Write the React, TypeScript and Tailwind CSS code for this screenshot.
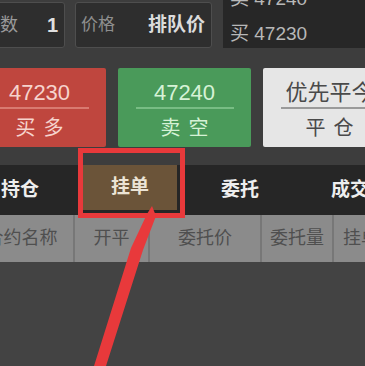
import React from "react";

const font = { fontFamily: '"Liberation Sans", "Noto Sans CJK SC", sans-serif' };

// ─── Order buttons ───────────────────────────────────────────────────────────

function OrderButton({
  top,
  label,
  tone,
}: {
  top: string;
  label: string;
  tone: "red" | "green" | "white";
}) {
  const box =
    tone === "red"
      ? "bg-[#bf463e] text-[#f6d3cd]"
      : tone === "green"
        ? "bg-[#4a9a5a] text-[#d6f2d6]"
        : "bg-[#e6e6e6] text-[#4a4a4a]";
  const line =
    tone === "red" ? "bg-[#d97a70]" : tone === "green" ? "bg-[#78bd84]" : "bg-[#9a9a9a]";
  return (
    <div className={`flex h-[79px] w-[133px] shrink-0 flex-col items-center rounded-[2px] ${box}`}>
      <div className="flex h-[39px] items-end pb-[3px] text-[22px] leading-none whitespace-nowrap">{top}</div>
      <div className={`h-[2px] w-[98px] ${line}`} />
      <div className="flex flex-1 items-center pl-[8px] text-[20px] leading-none tracking-[8px]">{label}</div>
    </div>
  );
}

export default function App() {
  const tabs = ["持仓", "挂单", "委托", "成交"];
  const cols = [
    { label: "合约名称", w: "w-[103px]" },
    { label: "开平", w: "w-[75px]" },
    { label: "委托价", w: "w-[112px]" },
    { label: "委托量", w: "w-[72px]" },
    { label: "挂单时间", w: "w-[92px]" },
  ];

  return (
    <div className="relative h-[366px] w-[365px] overflow-hidden bg-[#3d3d3d]" style={font}>
      {/* Top inputs */}
      <div className="flex h-[48px] pt-[2px]">
        <div className="ml-[-25px] flex h-[46px] w-[90px] shrink-0 items-center justify-between rounded-[3px] border border-[#4e4e4e] bg-[#2e2e2e] pl-[24px] pr-[6px]">
          <span className="text-[18px] text-[#9a9a9a]">数</span>
          <span className="text-[20px] font-bold text-[#e0e0e0]">1</span>
        </div>
        <div className="ml-[10px] flex h-[46px] w-[137px] shrink-0 items-center justify-between rounded-[3px] border border-[#4e4e4e] bg-[#2e2e2e] pl-[5px] pr-[6px]">
          <span className="text-[17px] text-[#8e8e8e]">价格</span>
          <span className="text-[19px] font-bold text-[#dcdcdc]">排队价</span>
        </div>
        <div className="ml-[11px] mt-[-2px] flex h-[48px] flex-1 flex-col justify-end overflow-hidden bg-[#272727] pb-[5px] pl-[7px] text-[19px] leading-none text-[#b8b8b8]">
          <div className="mb-[16px]">卖 47240</div>
          <div>买 47230</div>
        </div>
      </div>

      {/* Buy / sell buttons */}
      <div className="ml-[-27px] mt-[20px] flex gap-[12px]">
        <OrderButton top="47230" label="买多" tone="red" />
        <OrderButton top="47240" label="卖空" tone="green" />
        <OrderButton top="优先平今" label="平仓" tone="white" />
      </div>

      {/* Tabs */}
      <div className="mt-[18px] flex h-[50px] bg-[#262626]">
        <div className="ml-[-35px] flex">
          {tabs.map((t) => (
            <div key={t} className="flex w-[110px] shrink-0 items-center justify-center">
              {t === "挂单" ? (
                <div className="flex h-[45px] w-[94px] items-center justify-center self-start bg-[#6b5439] text-[19px] font-bold text-[#ece4d6]">
                  {t}
                </div>
              ) : (
                <span className="text-[19px] font-bold text-[#eeeeee]">{t}</span>
              )}
            </div>
          ))}
        </div>
      </div>

      {/* Table header */}
      <div className="flex h-[47px] bg-[#8b8b8b]">
        <div className="ml-[-30px] flex">
          {cols.map((c, i) => (
            <div
              key={c.label}
              className={`flex ${c.w} shrink-0 items-center justify-center text-[18px] text-[#4f4f4f] ${i > 0 ? "border-l-2 border-[#777777]" : ""}`}
            >
              {c.label}
            </div>
          ))}
        </div>
      </div>
      <div className="h-[104px] bg-[#434343]" />

      {/* Annotation */}
      <div className="absolute left-[78px] top-[148px] h-[70px] w-[107px] border-[5px] border-[#e8393b]" />
      <svg className="absolute left-0 top-0" width="365" height="366" viewBox="0 0 365 366">
        <polygon points="152,206 156,216 143,250 106,366 94,366 131,248 147,214" fill="#e8393b" />
      </svg>
    </div>
  );
}
